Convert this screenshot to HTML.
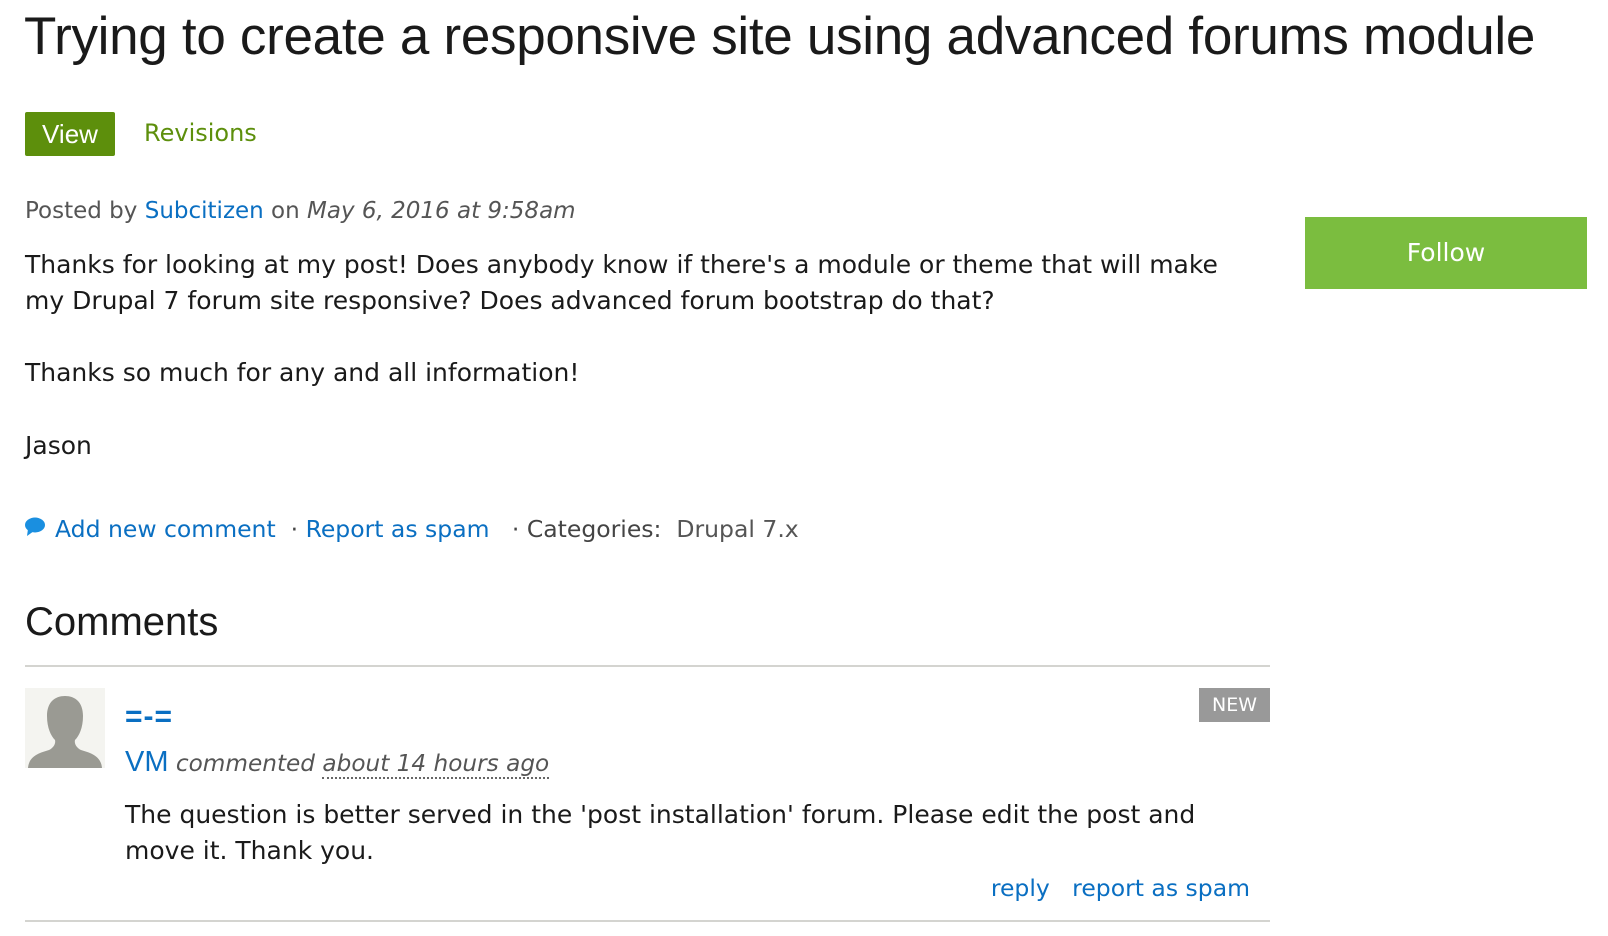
<!DOCTYPE html>
<html><head><meta charset="utf-8"><style>
body{margin:0;width:1608px;height:936px;background:#fff;font-family:"Liberation Sans",sans-serif;color:#222;position:relative;overflow:hidden}
.a{position:absolute;white-space:nowrap}
.dv{font-family:"DejaVu Sans",sans-serif}
h1{position:absolute;left:24px;top:6px;margin:0;font-weight:normal;font-size:53px;color:#1a1a1a;letter-spacing:-0.3px}
.view{position:absolute;left:25px;top:112px;width:90px;height:44px;background:#5d8f0c;color:#fff;font-size:26px;line-height:44px;text-align:center;border-radius:2px}
.rev{left:144px;top:118px;font-size:26px;color:#5d8f0c}
.meta{left:25px;top:198px;font-size:23px;color:#555}
.blue{color:#0a6fc2}
.body{left:25px;font-size:25px;color:#1a1a1a}
.follow{position:absolute;left:1305px;top:217px;width:282px;height:72px;background:#7bbd3f;color:#fff;font-size:27px;line-height:72px;text-align:center}
.links{left:25px;top:515px;font-size:23.5px;color:#444}
hr{position:absolute;left:25px;width:1245px;margin:0;border:0;border-top:2px solid #d4d4d0}
.av{position:absolute;left:25px;top:689px;width:80px;height:80px;background:#f4f4f0;overflow:hidden}
.new{position:absolute;left:1199px;top:689px;width:71px;height:34px;background:#999;color:#fff;font-size:21px;line-height:34px;text-align:center}
</style></head><body>
<h1>Trying to create a responsive site using advanced forums module</h1>
<div class="view">View</div>
<div class="a rev dv" style="font-size:24px;top:119px">Revisions</div>
<div class="a meta dv">Posted by <span class="blue">Subcitizen</span> on <i>May 6, 2016 at 9:58am</i></div>
<div class="a body dv" style="top:250px">Thanks for looking at my post! Does anybody know if there's a module or theme that will make</div>
<div class="a body dv" style="top:286px">my Drupal 7 forum site responsive? Does advanced forum bootstrap do that?</div>
<div class="a body dv" style="top:358px">Thanks so much for any and all information!</div>
<div class="a body dv" style="top:431px">Jason</div>
<div class="follow dv" style="font-size:25px">Follow</div>
<svg class="a" style="left:24px;top:517px" width="22" height="20" viewBox="0 0 22 20"><ellipse cx="11" cy="8" rx="10" ry="7.5" fill="#1a8fe0"/><path d="M4 12 L3 19 L10 14Z" fill="#1a8fe0"/></svg>
<div class="a links dv"><span class="blue" style="margin-left:30px">Add new comment</span> &nbsp;· <span class="blue">Report as spam</span> &nbsp;&nbsp;· Categories: &nbsp;<span style="color:#555">Drupal 7.x</span></div>
<div class="a" style="left:25px;top:600px;font-size:40px;color:#1a1a1a">Comments</div>
<hr style="top:665px">
<div class="av" style="top:688px"><svg width="80" height="80" viewBox="0 0 80 80"><path d="M40 8c-10 0-18 6-18 20 0 12 4 20 8 24 1 4-2 8-6 10-10 3-20 6-21 18h74c-1-12-11-15-21-18-4-2-7-6-6-10 4-4 8-12 8-24 0-14-8-20-18-20z" fill="#9a9a93"/></svg></div>
<div class="a blue" style="left:125px;top:700px;font-size:30px;font-weight:bold;letter-spacing:1px">=-=</div>
<div class="new dv" style="top:688px;font-size:19px">NEW</div>
<div class="a dv" style="left:125px;top:746px;font-size:23.2px;color:#555"><span class="blue" style="font-size:29px;font-style:normal;font-family:'Liberation Sans',sans-serif">VM</span> <i>commented <span style="border-bottom:2px dotted #666">about 14 hours ago</span></i></div>
<div class="a body dv" style="left:125px;top:800px">The question is better served in the 'post installation' forum. Please edit the post and</div>
<div class="a body dv" style="left:125px;top:836px">move it. Thank you.</div>
<div class="a blue dv" style="right:358px;top:874px;font-size:23.5px">reply &nbsp;&nbsp;report as spam</div>
<hr style="top:920px">
</body></html>
